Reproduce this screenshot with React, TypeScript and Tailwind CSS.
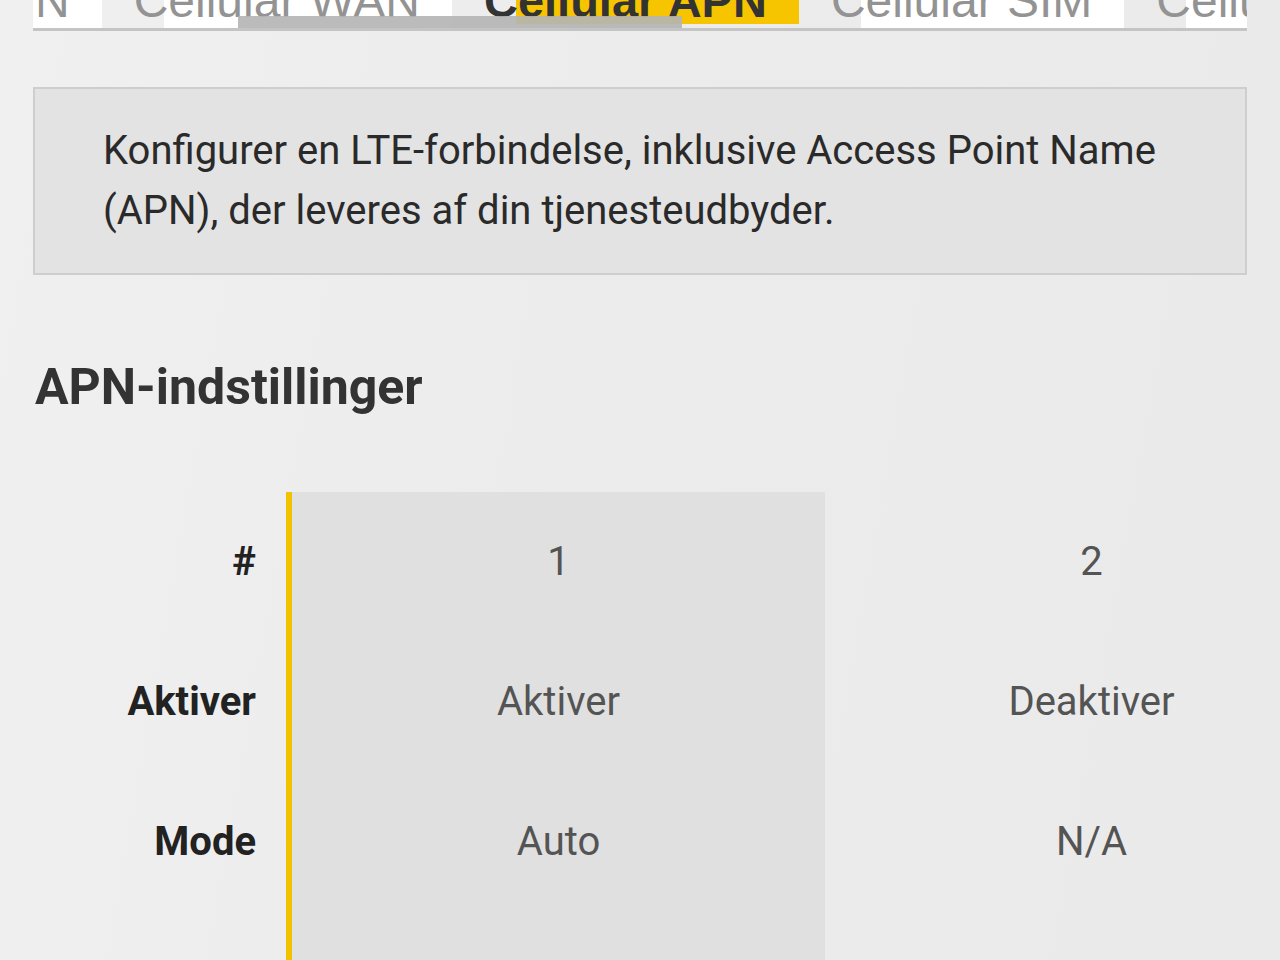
import React from "react";

const tabBg =
  "bg-[linear-gradient(to_right,transparent_62px,#ffffff_62px)] bg-no-repeat";

function Tab({ label, active, first }: { label: string; active?: boolean; first?: boolean }) {
  if (active) {
    return (
      <div className="shrink-0 pl-8 pr-8 bg-[linear-gradient(to_right,transparent_64px,#f6c500_64px)] bg-no-repeat bg-[length:100%_51px] font-bold text-[47px] text-[#333333] whitespace-nowrap">
        {label}
      </div>
    );
  }
  return (
    <div
      className={
        (first ? "pl-[2px] " : "pl-8 ") +
        "shrink-0 pr-8 text-[#939393] whitespace-nowrap " +
        (first ? "bg-white" : tabBg)
      }
    >
      {label}
    </div>
  );
}

export default function App() {
  const rows = [
    { label: "#", v1: "1", v2: "2" },
    { label: "Aktiver", v1: "Aktiver", v2: "Deaktiver" },
    { label: "Mode", v1: "Auto", v2: "N/A" },
    { label: "", v1: "", v2: "" },
  ];
  return (
    <div className="w-[1280px] h-[960px] overflow-hidden bg-[linear-gradient(100deg,#f0f0f0_0%,#ececec_45%,#eaeaea_100%)] font-['Roboto',sans-serif]">
      <div className="px-[33px]">
        {/* Tabs */}
        <div className="relative -mt-[27px] border-b-[3px] border-[#c4c4c4] overflow-hidden">
          <div className="flex font-['Liberation_Sans',Arial,sans-serif] text-[48px] leading-[55px]">
            <Tab label="N" first />
            <Tab label="Cellular WAN" />
            <Tab label="Cellular APN" active />
            <Tab label="Cellular SIM" />
            <Tab label="Cellular Status" />
          </div>
          <div className="absolute left-[205px] top-[43px] h-[12px] w-[444px] bg-[#b4b4b4]/90" />
        </div>

        {/* Info box */}
        <div className="mt-[56px] border-2 border-[#cecece] bg-[#e3e3e3] pl-[68px] pr-[40px] py-[32px] text-[40px] leading-[60px] text-[#2a2a2a]">
          Konfigurer en LTE-forbindelse, inklusive Access Point Name (APN), der leveres af din tjenesteudbyder.
        </div>

        {/* Heading */}
        <h2 className="mt-[84px] text-[50px] leading-[56px] font-bold text-[#333333] pl-[2px]">
          APN-indstillinger
        </h2>

        {/* Table */}
        <div className="mt-[77px] flex text-[40px]">
          <div className="w-[253px] shrink-0 flex flex-col">
            {rows.map((r, i) => (
              <div key={i} className="h-[140px] flex items-center justify-end pr-[30px] font-bold text-[#222222]">
                {r.label}
              </div>
            ))}
          </div>
          <div className="w-[6px] shrink-0 bg-[#f2c200]" />
          <div className="w-[533px] shrink-0 flex flex-col bg-[#e0e0e0]">
            {rows.map((r, i) => (
              <div key={i} className="h-[140px] flex items-center justify-center text-[#545454]">
                {r.v1}
              </div>
            ))}
          </div>
          <div className="w-[533px] shrink-0 flex flex-col">
            {rows.map((r, i) => (
              <div key={i} className="h-[140px] flex items-center justify-center text-[#545454]">
                {r.v2}
              </div>
            ))}
          </div>
        </div>
      </div>
    </div>
  );
}
